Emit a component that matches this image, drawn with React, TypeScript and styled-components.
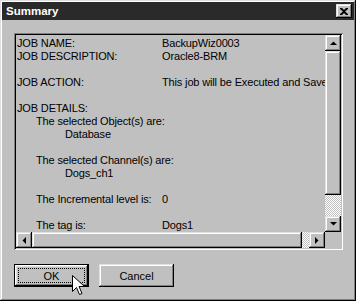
import React from 'react';
import styled, { createGlobalStyle } from 'styled-components';

type Line = {
  label?: string;
  value?: string;
  indent?: number;
};

const lines: Line[] = [
  { label: 'JOB NAME:', value: 'BackupWiz0003' },
  { label: 'JOB DESCRIPTION:', value: 'Oracle8-BRM' },
  {},
  { label: 'JOB ACTION:', value: 'This job will be Executed and Saved' },
  {},
  { label: 'JOB DETAILS:' },
  { label: 'The selected Object(s) are:', indent: 1 },
  { label: 'Database', indent: 2 },
  {},
  { label: 'The selected Channel(s) are:', indent: 1 },
  { label: 'Dogs_ch1', indent: 2 },
  {},
  { label: 'The Incremental level is:', value: '0', indent: 1 },
  {},
  { label: 'The tag is:', value: 'Dogs1', indent: 1 },
];

const GlobalStyle = createGlobalStyle`
  body {
    margin: 0;
    background: #c0c0c0;
    font-family: 'Liberation Sans', Arial, sans-serif;
  }
`;

const raised = `
  background: #c0c0c0;
  box-shadow: inset -1px -1px #000, inset 1px 1px #dfdfdf,
    inset -2px -2px #808080, inset 2px 2px #fff;
`;

const Window = styled.div`
  position: relative;
  width: 356px;
  height: 301px;
  box-sizing: border-box;
  padding: 2px;
  background: #c0c0c0;
  box-shadow: inset -1px -1px #000, inset 1px 1px #dfdfdf,
    inset -2px -2px #808080, inset 2px 2px #fff;
  display: flex;
  flex-direction: column;
`;

const TitleBar = styled.div`
  height: 18px;
  background: #2a2a2a;
  display: flex;
  align-items: center;
  justify-content: space-between;
  padding: 0 2px 0 4px;
`;

const Title = styled.span`
  color: #fff;
  font-weight: bold;
  font-size: 11.5px;
`;

const CloseButton = styled.div`
  ${raised}
  width: 16px;
  height: 14px;
  display: flex;
  align-items: center;
  justify-content: center;
`;

const Body = styled.div`
  padding: 13px 0 0 12px;
`;

const TextBox = styled.div`
  width: 329px;
  height: 217px;
  box-sizing: border-box;
  box-shadow: inset 1px 1px #808080, inset -1px -1px #fff,
    inset 2px 2px #000, inset -2px -2px #c0c0c0;
  padding: 2px;
  display: grid;
  grid-template-columns: 1fr 16px;
  grid-template-rows: 1fr 16px;
`;

const Content = styled.div`
  overflow: hidden;
  padding: 2px 0 0 1px;
  font-size: 11px;
  letter-spacing: -0.15px;
  color: #000;
`;

const Row = styled.div<{ $indent: number }>`
  height: 13px;
  line-height: 13px;
  display: flex;
  white-space: nowrap;
  padding-left: ${(p) => p.$indent * 19 + (p.$indent > 1 ? 10 : 0)}px;
`;

const Label = styled.span<{ $indent: number }>`
  flex: none;
  width: ${(p) => 145 - p.$indent * 19}px;
`;

const Bar = styled.div<{ $vertical?: boolean }>`
  display: flex;
  flex-direction: ${(p) => (p.$vertical ? 'column' : 'row')};
`;

const ArrowButton = styled.div`
  ${raised}
  flex: none;
  width: 16px;
  height: 16px;
  display: flex;
  align-items: center;
  justify-content: center;
`;

const Thumb = styled.div<{ $size: number }>`
  ${raised}
  flex: none;
  flex-basis: ${(p) => p.$size}px;
`;

const Track = styled.div`
  flex: 1;
  background: repeating-conic-gradient(#fff 0 25%, #c0c0c0 0 50%) 0 0 / 2px 2px;
`;

const Corner = styled.div`
  background: #c0c0c0;
`;

const Buttons = styled.div`
  display: flex;
  gap: 10px;
  padding: 14px 0 0 12px;
`;

const Button = styled.div<{ $default?: boolean }>`
  position: relative;
  width: 75px;
  height: 23px;
  box-sizing: border-box;
  font-size: 11px;
  display: flex;
  align-items: center;
  justify-content: center;
  ${raised}
  ${(p) =>
    p.$default &&
    `
    box-shadow: inset 0 0 0 1px #000, inset -2px -2px #000, inset 2px 2px #fff,
      inset -3px -3px #808080, inset 3px 3px #dfdfdf;
  `}
`;

const Focus = styled.div`
  position: absolute;
  inset: 4px;
  border: 1px dotted #000;
`;

const Cursor = styled.svg`
  position: absolute;
  left: 72px;
  top: 275px;
`;

const Arrow = ({ dir }: { dir: 'up' | 'down' | 'left' | 'right' }) => {
  const pts = {
    up: '0,4 7,4 3.5,0.5',
    down: '0,0 7,0 3.5,3.5',
    left: '4,0 4,7 0.5,3.5',
    right: '0,0 0,7 3.5,3.5',
  }[dir];
  const vertical = dir === 'up' || dir === 'down';
  return (
    <svg width={vertical ? 7 : 4} height={vertical ? 4 : 7}>
      <polygon points={pts} fill='#000' />
    </svg>
  );
};

const App = () => {
  return (
    <>
      <GlobalStyle />
      <Window>
        <TitleBar>
          <Title>Summary</Title>
          <CloseButton>
            <svg width='8' height='7' viewBox='0 0 8 7'>
              <path d='M0 0h2l2 2 2-2h2v1L5 3.5 8 6v1H6L4 5 2 7H0V6l3-2.5L0 1z' fill='#000' />
            </svg>
          </CloseButton>
        </TitleBar>
        <Body>
          <TextBox>
            <Content>
              {lines.map((l, i) => (
                <Row key={i} $indent={l.indent ?? 0}>
                  {l.value ? (
                    <>
                      <Label $indent={l.indent ?? 0}>{l.label}</Label>
                      <span>{l.value}</span>
                    </>
                  ) : (
                    <span>{l.label ?? '\u00a0'}</span>
                  )}
                </Row>
              ))}
            </Content>
            <Bar $vertical>
              <ArrowButton>
                <Arrow dir='up' />
              </ArrowButton>
              <Thumb $size={144} />
              <Track />
              <ArrowButton>
                <Arrow dir='down' />
              </ArrowButton>
            </Bar>
            <Bar>
              <ArrowButton>
                <Arrow dir='left' />
              </ArrowButton>
              <Thumb $size={270} />
              <Track />
              <ArrowButton>
                <Arrow dir='right' />
              </ArrowButton>
            </Bar>
            <Corner />
          </TextBox>
        </Body>
        <Buttons>
          <Button $default>
            OK
            <Focus />
          </Button>
          <Button>Cancel</Button>
        </Buttons>
        <Cursor width='13' height='21' viewBox='0 0 13 21'>
          <path
            d='M0.5 0.5v16l4-4 3 7 2.5-1-3-7h5.5z'
            fill='#fff'
            stroke='#000'
            strokeWidth='1'
            strokeLinejoin='miter'
          />
        </Cursor>
      </Window>
    </>
  );
};

export default App;
